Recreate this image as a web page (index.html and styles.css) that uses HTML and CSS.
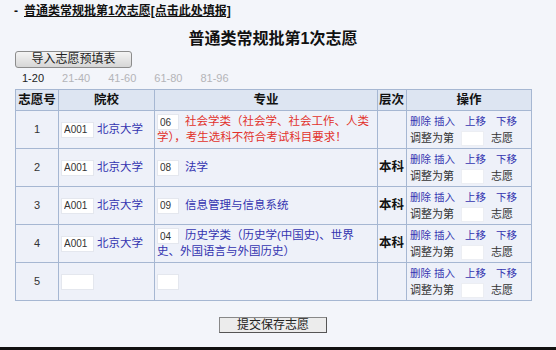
FILE: index.html
```html
<!DOCTYPE html>
<html lang="zh-CN">
<head>
<meta charset="utf-8">
<title>普通类常规批第1次志愿</title>
<link rel="stylesheet" href="styles.css">
</head>
<body>
<div class="page">
  <div class="topline"><span class="dash">-</span><a class="toplink" href="#">普通类常规批第1次志愿[点击此处填报]</a></div>
  <div class="main">
    <h1 class="title">普通类常规批第1次志愿</h1>
    <div class="toolbar"><button class="btn-import" type="button">导入志愿预填表</button></div>
    <div class="pager"><span class="cur">1-20</span><span>21-40</span><span>41-60</span><span>61-80</span><span>81-96</span></div>
    <table class="grid">
      <colgroup><col class="c-no"><col class="c-school"><col class="c-major"><col class="c-level"><col class="c-ops"></colgroup>
      <thead>
        <tr><th>志愿号</th><th>院校</th><th>专业</th><th class="h-level">层次</th><th>操作</th></tr>
      </thead>
      <tbody>
        <tr>
          <td class="no">1</td>
          <td class="school"><input class="code" value="A001"><a class="name" href="#">北京大学</a></td>
          <td class="major"><input class="mcode" value="06"><span class="warn">社会学类（社会学、社会工作、人类学），考生选科不符合考试科目要求！</span></td>
          <td class="level"></td>
          <td class="ops"><div class="links"><a href="#">删除</a><a href="#">插入</a><a href="#">上移</a><a href="#">下移</a></div><div class="move">调整为第<input class="pos">志愿</div></td>
        </tr>
        <tr>
          <td class="no">2</td>
          <td class="school"><input class="code" value="A001"><a class="name" href="#">北京大学</a></td>
          <td class="major"><input class="mcode" value="08"><span class="mname">法学</span></td>
          <td class="level">本科</td>
          <td class="ops"><div class="links"><a href="#">删除</a><a href="#">插入</a><a href="#">上移</a><a href="#">下移</a></div><div class="move">调整为第<input class="pos">志愿</div></td>
        </tr>
        <tr>
          <td class="no">3</td>
          <td class="school"><input class="code" value="A001"><a class="name" href="#">北京大学</a></td>
          <td class="major"><input class="mcode" value="09"><span class="mname">信息管理与信息系统</span></td>
          <td class="level">本科</td>
          <td class="ops"><div class="links"><a href="#">删除</a><a href="#">插入</a><a href="#">上移</a><a href="#">下移</a></div><div class="move">调整为第<input class="pos">志愿</div></td>
        </tr>
        <tr>
          <td class="no">4</td>
          <td class="school"><input class="code" value="A001"><a class="name" href="#">北京大学</a></td>
          <td class="major"><input class="mcode" value="04"><span class="mname">历史学类（历史学(中国史)、世界史、外国语言与外国历史）</span></td>
          <td class="level">本科</td>
          <td class="ops"><div class="links"><a href="#">删除</a><a href="#">插入</a><a href="#">上移</a><a href="#">下移</a></div><div class="move">调整为第<input class="pos">志愿</div></td>
        </tr>
        <tr>
          <td class="no">5</td>
          <td class="school"><input class="code" value=""></td>
          <td class="major"><input class="mcode" value=""></td>
          <td class="level"></td>
          <td class="ops"><div class="links"><a href="#">删除</a><a href="#">插入</a><a href="#">上移</a><a href="#">下移</a></div><div class="move">调整为第<input class="pos">志愿</div></td>
        </tr>
      </tbody>
    </table>
    <div class="submit-row"><button class="btn-submit" type="button">提交保存志愿</button></div>
  </div>
  <div class="spacer"></div>
  <div class="bottom-bar"></div>
</div>
</body>
</html>
```

FILE: styles.css
```css
html, body {
  margin: 0;
  padding: 0;
}
body {
  background: #f3f5fa;
  font-family: "Liberation Sans", "Noto Sans CJK SC", sans-serif;
  color: #222;
}
.page {
  height: 350px;
  display: flex;
  flex-direction: column;
}
.topline {
  padding: 4px 0 0 14px;
  font-size: 12px;
  line-height: 14px;
  font-weight: bold;
  display: flex;
  gap: 6px;
  color: #111;
}
.toplink {
  color: #111;
  text-decoration: underline;
}
.main {
  width: 516px;
  margin-left: 15px;
  display: flex;
  flex-direction: column;
}
.title {
  margin: 11px 0 0;
  font-size: 16px;
  line-height: 20px;
  text-align: center;
  font-weight: bold;
  color: #111;
}
.toolbar {
  margin-top: 2px;
  display: flex;
}
.btn-import {
  width: 117px;
  height: 17px;
  padding: 0;
  border: 1px solid #8c8c8c;
  border-radius: 3px;
  background: linear-gradient(#f4f4f4, #d6d6d6);
  font-family: "Liberation Sans", "Noto Sans CJK SC", sans-serif;
  font-size: 12px;
  line-height: 15px;
  color: #222;
}
.pager {
  margin-top: 3px;
  padding-left: 7px;
  display: flex;
  gap: 18px;
  font-size: 11px;
  line-height: 14px;
  color: #b4b4b8;
}
.pager .cur {
  color: #222;
}
.grid {
  margin-top: 4px;
  width: 516px;
  table-layout: fixed;
  border-collapse: collapse;
  background: #eef1f9;
  font-size: 11.5px;
}
.c-no { width: 43px; }
.c-school { width: 96px; }
.c-major { width: 223px; }
.c-level { width: 29px; }
.c-ops { width: 125px; }
.grid th, .grid td {
  border: 1px solid #a6b7d2;
  padding: 0 2px;
}
.grid th {
  background: #dde5f2;
  height: 20px;
  font-size: 12.5px;
  line-height: 16px;
  font-weight: bold;
  color: #111;
  text-align: center;
  white-space: nowrap;
}
.grid th.h-level {
  text-align: left;
  padding: 0 1px;
}
.grid td {
  height: 37px;
  line-height: 15px;
  vertical-align: middle;
}
.no {
  text-align: center;
  font-size: 11px;
  color: #333;
}
.school {
  padding-left: 4px;
  white-space: nowrap;
}
.code {
  box-sizing: border-box;
  width: 33px;
  height: 16px;
  margin: 0 3px 0 0;
  padding: 0 2px;
  border: 1px solid #e4e7ee;
  background: #fff;
  font-family: "Liberation Sans", sans-serif;
  font-size: 10px;
  color: #333;
  vertical-align: middle;
}
.name, .mname {
  color: #3434b0;
  text-decoration: none;
}
.grid td.major {
  padding: 0 6px 0 2px;
}
.mcode {
  box-sizing: border-box;
  width: 22px;
  height: 16px;
  margin: 0 6px 0 0;
  padding: 0 2px;
  border: 1px solid #e4e7ee;
  background: #fff;
  font-family: "Liberation Sans", sans-serif;
  font-size: 10px;
  color: #333;
  vertical-align: middle;
}
.warn {
  color: #e2312b;
}
.grid td.level {
  padding: 0 1px;
  white-space: nowrap;
  font-weight: bold;
  font-size: 12.5px;
  color: #111;
}
.grid td.ops {
  padding: 0 2px 0 3px;
  font-size: 11px;
  line-height: 17px;
}
.links {
  display: flex;
}
.links a {
  color: #3434b0;
  text-decoration: none;
  font-size: 10.5px;
  margin-left: 10px;
}
.links a:first-child {
  margin-left: 0;
}
.links a:nth-child(2) {
  margin-left: 3px;
}
.move {
  display: flex;
  align-items: center;
  color: #333;
}
.pos {
  box-sizing: border-box;
  width: 23px;
  height: 15px;
  margin: 0 7px;
  padding: 0;
  border: 1px solid #eceef3;
  background: #fff;
}
.submit-row {
  margin-top: 16px;
  display: flex;
  justify-content: center;
}
.btn-submit {
  width: 108px;
  height: 16px;
  padding: 0;
  border: 1px solid #555;
  border-top-color: #888;
  border-left-color: #888;
  background: #ececec;
  font-family: "Liberation Sans", "Noto Sans CJK SC", sans-serif;
  font-size: 12px;
  line-height: 14px;
  color: #222;
}
.spacer {
  flex: 1;
}
.bottom-bar {
  height: 3px;
  background: #111;
}
```
